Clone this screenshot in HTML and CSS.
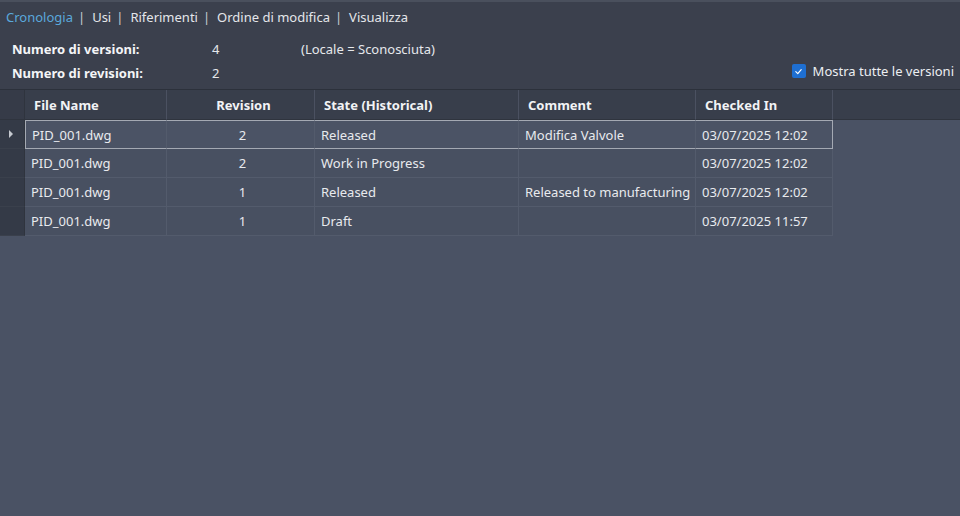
FILE: index.html
```html
<!DOCTYPE html>
<html>
<head>
<meta charset="utf-8">
<link rel="stylesheet" href="styles.css">
</head>
<body>
<div class="app">
  <div class="top">
    <nav class="tabs">
      <span class="tab active">Cronologia</span><span class="sep">|</span>
      <span class="tab">Usi</span><span class="sep">|</span>
      <span class="tab">Riferimenti</span><span class="sep">|</span>
      <span class="tab">Ordine di modifica</span><span class="sep">|</span>
      <span class="tab">Visualizza</span>
    </nav>
    <div class="info">
      <div class="info-rows">
        <div class="info-row">
          <span class="label">Numero di versioni:</span>
          <span class="value">4</span>
          <span class="note">(Locale = Sconosciuta)</span>
        </div>
        <div class="info-row">
          <span class="label">Numero di revisioni:</span>
          <span class="value">2</span>
        </div>
      </div>
      <label class="check">
        <span class="box"><svg width="9" height="9" viewBox="0 0 10 10"><path d="M2 5.2 L4.2 7.3 L8 3" fill="none" stroke="#ffffff" stroke-width="1.3" stroke-linecap="round" stroke-linejoin="round"/></svg></span>
        <span>Mostra tutte le versioni</span>
      </label>
    </div>
  </div>
  <div class="grid">
    <div class="hdr rowhead"></div>
    <div class="hdr">File Name</div>
    <div class="hdr center">Revision</div>
    <div class="hdr">State (Historical)</div>
    <div class="hdr">Comment</div>
    <div class="hdr">Checked In</div>
    <div class="hdr fill"></div>

    <div class="rowhead cell"><span class="arrow"></span></div>
    <div class="cell sel first">PID_001.dwg</div>
    <div class="cell sel center">2</div>
    <div class="cell sel">Released</div>
    <div class="cell sel">Modifica Valvole</div>
    <div class="cell sel last">03/07/2025 12:02</div>
    <div class="blank"></div>

    <div class="rowhead cell"></div>
    <div class="cell">PID_001.dwg</div>
    <div class="cell center">2</div>
    <div class="cell">Work in Progress</div>
    <div class="cell"></div>
    <div class="cell">03/07/2025 12:02</div>
    <div class="blank"></div>

    <div class="rowhead cell"></div>
    <div class="cell">PID_001.dwg</div>
    <div class="cell center">1</div>
    <div class="cell">Released</div>
    <div class="cell">Released to manufacturing</div>
    <div class="cell">03/07/2025 12:02</div>
    <div class="blank"></div>

    <div class="rowhead cell"></div>
    <div class="cell">PID_001.dwg</div>
    <div class="cell center">1</div>
    <div class="cell">Draft</div>
    <div class="cell"></div>
    <div class="cell">03/07/2025 11:57</div>
    <div class="blank"></div>
  </div>
  <div class="empty"></div>
</div>
</body>
</html>
```
FILE: styles.css
```css
* { box-sizing: border-box; }
html, body {
  margin: 0;
  padding: 0;
  width: 960px;
  height: 516px;
  overflow: hidden;
}
body {
  font-family: "Noto Sans", "Open Sans", sans-serif;
  font-size: 13px;
  color: #e6e8ec;
  background: #4a5264;
}
.app {
  display: flex;
  flex-direction: column;
  height: 516px;
}
.top {
  background: #3b404d;
  border-top: 2px solid #4a505d;
  border-bottom: 1px solid #2c313b;
  padding: 6px 6px 0 6px;
  height: 90px;
}
.tabs {
  display: flex;
  align-items: center;
  height: 18px;
  line-height: 18px;
  color: #e4e6ea;
}
.tab.active { color: #5aa8dc; }
.sep { color: #c9ccd2; margin: 0 7px 0 5px; }
.info {
  display: flex;
  justify-content: space-between;
  align-items: flex-end;
  padding: 11px 0 0 6px;
}
.info-rows { display: flex; flex-direction: column; }
.info-row {
  display: flex;
  height: 24px;
  align-items: center;
}
.label { font-weight: 700; width: 200px; color: #f4f5f7; }
.value { width: 89px; }
.check {
  display: flex;
  align-items: center;
  gap: 7px;
  height: 24px;
  margin-bottom: 2px;
  color: #eceef1;
}
.box {
  width: 14px;
  height: 14px;
  border-radius: 2px;
  background: #1e6fd2;
  display: flex;
  align-items: center;
  justify-content: center;
}
.grid {
  display: grid;
  grid-template-columns: 25px 142px 148px 204px 177px 137px 1fr;
  grid-auto-rows: 29px;
  grid-template-rows: 30px;
  background: #4a5264;
}
.hdr {
  background: #383e4b;
  font-weight: 700;
  color: #f2f3f5;
  display: flex;
  align-items: center;
  padding-left: 9px;
  border-right: 1px solid #4b5161;
  border-bottom: 1px solid #2f343e;
}
.hdr.center { justify-content: center; padding-left: 6px; }
.hdr.fill { border-right: none; }
.hdr.rowhead { background: #363b48; padding: 0; border-right: 1px solid #2f343e; }
.cell {
  display: flex;
  align-items: center;
  padding-left: 6px;
  background: #485061;
  border-right: 1px solid #535b6c;
  border-bottom: 1px solid #535b6c;
  color: #e8eaee;
}
.cell.center { justify-content: center; padding-left: 4px; }
.rowhead.cell {
  background: #343a47;
  border-right: 1px solid #2f343e;
  border-bottom: 1px solid #3a404c;
  justify-content: center;
  padding: 0;
}
.arrow {
  width: 0;
  height: 0;
  border-top: 4px solid transparent;
  border-bottom: 4px solid transparent;
  border-left: 4px solid #c5c9d0;
  margin-left: -2px;
}
.cell.sel {
  border-top: 1px solid #a4a9b3;
  border-bottom: 1px solid #a4a9b3;
  background: #4b5365;
}
.cell.sel.first { border-left: 1px solid #a4a9b3; }
.cell.sel.last { border-right: 1px solid #a4a9b3; }
.blank { background: #4a5264; }
.empty { flex: 1; background: #4a5264; }
```
